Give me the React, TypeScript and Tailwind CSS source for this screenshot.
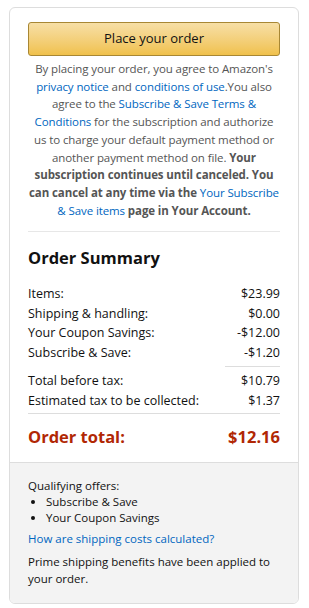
const rows = [
  { label: "Items:", value: "$23.99" },
  { label: "Shipping & handling:", value: "$0.00" },
  { label: "Your Coupon Savings:", value: "-$12.00" },
  { label: "Subscribe & Save:", value: "-$1.20" },
];

export default function App() {
  return (
    <div className="bg-white min-h-[608px] pt-[7px] pl-[9px] font-['Open_Sans',sans-serif] text-[#111]">
      <div className="w-[290px] border border-[#ddd] rounded-[6px] overflow-hidden">
        <div className="px-[18px] pt-[14px] pb-[12px]">
          <button className="w-full h-[34px] rounded-[3px] border border-[#a88734] bg-gradient-to-b from-[#f7dfa5] to-[#f0c14b] text-[13px] text-[#111]">
            Place your order
          </button>
          <p className="mt-[4px] text-[11.5px] leading-[17.7px] text-center text-[#555] tracking-[-0.1px]">
            By placing your order, you agree to Amazon's{" "}
            <a className="text-[#0066c0]">privacy notice</a> and{" "}
            <a className="text-[#0066c0]">conditions of use</a>.You also agree to the{" "}
            <a className="text-[#0066c0]">Subscribe &amp; Save Terms &amp; Conditions</a> for the
            subscription and authorize us to charge your default payment method or another payment
            method on file.{" "}
            <span className="font-bold">
              Your subscription continues until canceled. You can cancel at any time via the
            </span>{" "}
            <a className="text-[#0066c0]">Your Subscribe &amp; Save items</a>{" "}
            <span className="font-bold">page in Your Account.</span>
          </p>
          <div className="mt-[12px] border-t border-[#e7e7e7]" />
          <h3 className="mt-[14px] text-[16.5px] font-bold leading-[24px]">Order Summary</h3>
          <div className="mt-[14px] text-[12.5px] leading-[19.5px]">
            {rows.map((r) => (
              <div key={r.label} className="flex justify-between">
                <span>{r.label}</span>
                <span>{r.value}</span>
              </div>
            ))}
            <div className="flex justify-end my-[4px]">
              <div className="w-[55px] border-t border-[#ddd]" />
            </div>
            <div className="flex justify-between">
              <span>Total before tax:</span>
              <span>$10.79</span>
            </div>
            <div className="flex justify-between">
              <span>Estimated tax to be collected:</span>
              <span>$1.37</span>
            </div>
          </div>
          <div className="mt-[3px] border-t border-[#ddd]" />
          <div className="mt-[10px] flex justify-between text-[16.5px] font-bold text-[#b12704] leading-[26px]">
            <span>Order total:</span>
            <span>$12.16</span>
          </div>
        </div>
        <div className="bg-[#f3f3f3] border-t border-[#ddd] px-[18px] pt-[15px] pb-[16px] text-[11.5px] leading-[16px]">
          <div>Qualifying offers:</div>
          <ul className="list-disc pl-[18px]">
            <li>Subscribe &amp; Save</li>
            <li>Your Coupon Savings</li>
          </ul>
          <a className="block mt-[5px] text-[#0066c0]">How are shipping costs calculated?</a>
          <p className="mt-[6px] leading-[17px]">
            Prime shipping benefits have been applied to your order.
          </p>
        </div>
      </div>
    </div>
  );
}
